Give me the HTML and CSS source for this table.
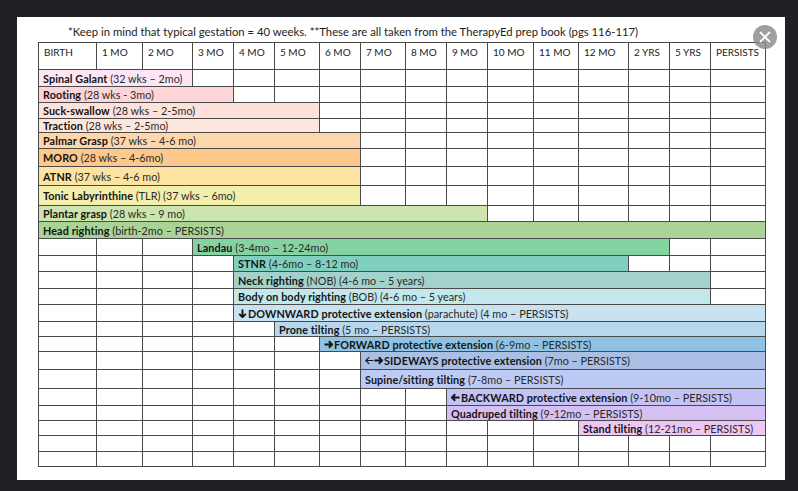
FILE: index.html
```html
<!DOCTYPE html>
<html>
<head>
<meta charset="utf-8">
<link rel="stylesheet" href="styles.css">
</head>
<body>
<div class="card">
  <p class="title">*Keep in mind that typical gestation = 40 weeks. **These are all taken from the TherapyEd prep book (pgs 116-117)</p>
  <div class="chart">
    <div class="c h">BIRTH</div><div class="c h">1 MO</div><div class="c h">2 MO</div><div class="c h">3 MO</div><div class="c h">4 MO</div><div class="c h">5 MO</div><div class="c h">6 MO</div><div class="c h">7 MO</div><div class="c h">8 MO</div><div class="c h">9 MO</div><div class="c h">10 MO</div><div class="c h">11 MO</div><div class="c h">12 MO</div><div class="c h">2 YRS</div><div class="c h">5 YRS</div><div class="c h">PERSISTS</div>

    <div class="c bar s3 spinal"><b>Spinal Galant</b>&nbsp;(32 wks – 2mo)</div><div class="c"></div><div class="c"></div><div class="c"></div><div class="c"></div><div class="c"></div><div class="c"></div><div class="c"></div><div class="c"></div><div class="c"></div><div class="c"></div><div class="c"></div><div class="c"></div><div class="c"></div>

    <div class="c bar s4 rooting"><b>Rooting</b>&nbsp;(28 wks - 3mo)</div><div class="c"></div><div class="c"></div><div class="c"></div><div class="c"></div><div class="c"></div><div class="c"></div><div class="c"></div><div class="c"></div><div class="c"></div><div class="c"></div><div class="c"></div><div class="c"></div>

    <div class="c bar s6 suck"><b>Suck-swallow</b>&nbsp;(28 wks – 2-5mo)</div><div class="c"></div><div class="c"></div><div class="c"></div><div class="c"></div><div class="c"></div><div class="c"></div><div class="c"></div><div class="c"></div><div class="c"></div><div class="c"></div>

    <div class="c bar s6 traction"><b>Traction</b>&nbsp;(28 wks – 2-5mo)</div><div class="c"></div><div class="c"></div><div class="c"></div><div class="c"></div><div class="c"></div><div class="c"></div><div class="c"></div><div class="c"></div><div class="c"></div><div class="c"></div>

    <div class="c bar s7 palmar"><b>Palmar Grasp</b>&nbsp;(37 wks – 4-6 mo)</div><div class="c"></div><div class="c"></div><div class="c"></div><div class="c"></div><div class="c"></div><div class="c"></div><div class="c"></div><div class="c"></div><div class="c"></div>

    <div class="c bar s7 moro"><b>MORO</b>&nbsp;(28 wks – 4-6mo)</div><div class="c"></div><div class="c"></div><div class="c"></div><div class="c"></div><div class="c"></div><div class="c"></div><div class="c"></div><div class="c"></div><div class="c"></div>

    <div class="c bar s7 atnr"><b>ATNR</b>&nbsp;(37 wks – 4-6 mo)</div><div class="c"></div><div class="c"></div><div class="c"></div><div class="c"></div><div class="c"></div><div class="c"></div><div class="c"></div><div class="c"></div><div class="c"></div>

    <div class="c bar s7 tlr"><b>Tonic Labyrinthine</b>&nbsp;(TLR) (37 wks – 6mo)</div><div class="c"></div><div class="c"></div><div class="c"></div><div class="c"></div><div class="c"></div><div class="c"></div><div class="c"></div><div class="c"></div><div class="c"></div>

    <div class="c bar s10 plantar"><b>Plantar grasp</b>&nbsp;(28 wks – 9 mo)</div><div class="c"></div><div class="c"></div><div class="c"></div><div class="c"></div><div class="c"></div><div class="c"></div>

    <div class="c bar s16 head"><b>Head righting</b>&nbsp;(birth-2mo – PERSISTS)</div>

    <div class="c"></div><div class="c"></div><div class="c"></div><div class="c bar s11 landau"><b>Landau</b>&nbsp;(3-4mo – 12-24mo)</div><div class="c"></div><div class="c"></div>

    <div class="c"></div><div class="c"></div><div class="c"></div><div class="c"></div><div class="c bar s9 stnr"><b>STNR</b>&nbsp;(4-6mo – 8-12 mo)</div><div class="c"></div><div class="c"></div><div class="c"></div>

    <div class="c"></div><div class="c"></div><div class="c"></div><div class="c"></div><div class="c bar s11 neck"><b>Neck righting</b>&nbsp;(NOB) (4-6 mo – 5 years)</div><div class="c"></div>

    <div class="c"></div><div class="c"></div><div class="c"></div><div class="c"></div><div class="c bar s11 bob"><b>Body on body righting</b>&nbsp;(BOB) (4-6 mo – 5 years)</div><div class="c"></div>

    <div class="c"></div><div class="c"></div><div class="c"></div><div class="c"></div><div class="c bar s12 down"><b><svg class="arr" viewBox="0 0 9 9"><path d="M4.5 0.5V8M1.2 4.8L4.5 8.2L7.8 4.8"/></svg>DOWNWARD protective extension</b>&nbsp;(parachute) (4 mo – PERSISTS)</div>

    <div class="c"></div><div class="c"></div><div class="c"></div><div class="c"></div><div class="c"></div><div class="c bar s11 prone"><b>Prone tilting</b>&nbsp;(5 mo – PERSISTS)</div>

    <div class="c"></div><div class="c"></div><div class="c"></div><div class="c"></div><div class="c"></div><div class="c"></div><div class="c bar s10 forward"><b><svg class="arr" viewBox="0 0 9 9"><path d="M0.5 4.5H8M4.8 1.2L8.2 4.5L4.8 7.8"/></svg>FORWARD protective extension</b>&nbsp;(6-9mo – PERSISTS)</div>

    <div class="c"></div><div class="c"></div><div class="c"></div><div class="c"></div><div class="c"></div><div class="c"></div><div class="c"></div><div class="c bar s9 side"><b><svg class="arr thin" viewBox="0 0 9 9"><path d="M8.5 4.5H1M4.2 1.2L0.8 4.5L4.2 7.8"/></svg><svg class="arr" viewBox="0 0 9 9"><path d="M0.5 4.5H8M4.8 1.2L8.2 4.5L4.8 7.8"/></svg>SIDEWAYS protective extension</b>&nbsp;(7mo – PERSISTS)</div>

    <div class="c"></div><div class="c"></div><div class="c"></div><div class="c"></div><div class="c"></div><div class="c"></div><div class="c"></div><div class="c bar s9 supine"><b>Supine/sitting tilting</b>&nbsp;(7-8mo – PERSISTS)</div>

    <div class="c"></div><div class="c"></div><div class="c"></div><div class="c"></div><div class="c"></div><div class="c"></div><div class="c"></div><div class="c"></div><div class="c"></div><div class="c bar s7 back"><b><svg class="arr" viewBox="0 0 9 9"><path d="M8.5 4.5H1M4.2 1.2L0.8 4.5L4.2 7.8"/></svg>BACKWARD protective extension</b>&nbsp;(9-10mo – PERSISTS)</div>

    <div class="c"></div><div class="c"></div><div class="c"></div><div class="c"></div><div class="c"></div><div class="c"></div><div class="c"></div><div class="c"></div><div class="c"></div><div class="c bar s7 quad"><b>Quadruped tilting</b>&nbsp;(9-12mo – PERSISTS)</div>

    <div class="c"></div><div class="c"></div><div class="c"></div><div class="c"></div><div class="c"></div><div class="c"></div><div class="c"></div><div class="c"></div><div class="c"></div><div class="c"></div><div class="c"></div><div class="c"></div><div class="c bar s4 stand"><b>Stand tilting</b>&nbsp;(12-21mo – PERSISTS)</div>

    <div class="c"></div><div class="c"></div><div class="c"></div><div class="c"></div><div class="c"></div><div class="c"></div><div class="c"></div><div class="c"></div><div class="c"></div><div class="c"></div><div class="c"></div><div class="c"></div><div class="c"></div><div class="c"></div><div class="c"></div><div class="c"></div>

    <div class="c"></div><div class="c"></div><div class="c"></div><div class="c"></div><div class="c"></div><div class="c"></div><div class="c"></div><div class="c"></div><div class="c"></div><div class="c"></div><div class="c"></div><div class="c"></div><div class="c"></div><div class="c"></div><div class="c"></div><div class="c"></div>
  </div>
  <button class="close" aria-label="Close"><svg viewBox="0 0 24 24"><path d="M7 7L17 17M17 7L7 17"/></svg></button>
</div>
</body>
</html>
```

FILE: styles.css
```css
html, body {
  margin: 0;
  padding: 0;
  background: #1f2127;
  height: 491px;
  overflow: hidden;
  font-family: Lato, "Liberation Sans", sans-serif;
}

.card {
  position: relative;
  margin: 17px 0 0 17px;
  width: 768px;
  height: 463px;
  background: #fff;
  padding: 7px 0 0 21px;
  box-sizing: border-box;
}

.title {
  margin: 0 0 2px 30px;
  font-size: 11.3px;
  line-height: 16px;
  color: #1c1c1c;
  white-space: nowrap;
}

.chart {
  display: grid;
  width: max-content;
  grid-template-columns: 58px 46px 50px 41px 41px 45px 41px 45px 41px 41px 46px 45px 50px 41px 41px 55px;
  grid-template-rows: 27px 17px 16px 16px 14px 16px 18px 19px 20px 16px 17px 17px 16px 17px 16px 17px 15px 15px 18px 19px 17px 15px 15px 16px 15px;
  border-top: 1px solid #4a4a4a;
  border-left: 1px solid #4a4a4a;
}

.c {
  box-sizing: border-box;
  border-right: 1px solid #4a4a4a;
  border-bottom: 1px solid #4a4a4a;
  min-width: 0;
}

.h {
  font-size: 10px;
  line-height: 12px;
  padding: 3px 0 0 5px;
  color: #222;
  white-space: nowrap;
}

.bar {
  display: flex;
  align-items: center;
  padding-left: 4px;
  font-size: 10.8px;
  color: #2a2a2a;
  white-space: nowrap;
  overflow: visible;
}

.bar b {
  font-weight: 700;
  color: #141414;
  letter-spacing: 0.1px;
  display: inline-flex;
  align-items: center;
}

.arr {
  width: 9px;
  height: 9px;
  margin-right: 1px;
  fill: none;
  stroke: #141414;
  stroke-width: 1.9;
}

.arr.thin {
  stroke-width: 1.1;
  margin-right: 0;
}

.s3 { grid-column: span 3; }
.s4 { grid-column: span 4; }
.s6 { grid-column: span 6; }
.s7 { grid-column: span 7; }
.s9 { grid-column: span 9; }
.s10 { grid-column: span 10; }
.s11 { grid-column: span 11; }
.s12 { grid-column: span 12; }
.s16 { grid-column: span 16; }

.spinal { background: #fce5f5; }
.rooting { background: #fdd5d8; }
.suck { background: #fde1da; }
.traction { background: #fde7dc; }
.palmar { background: #fdd6ac; }
.moro { background: #fcc88c; }
.atnr { background: #fde3a2; }
.tlr { background: #f3eeab; }
.plantar { background: #cde4ae; }
.head { background: #a9d496; }
.landau { background: #86d3a2; }
.stnr { background: #80d0c0; }
.neck { background: #a3d2cc; }
.bob { background: #c2e8eb; }
.down { background: #c8e2f0; }
.prone { background: #b6d7ee; }
.forward { background: #8fc1e2; }
.side { background: #a9c0e4; }
.supine { background: #bccaf4; }
.back { background: #c3c3f6; }
.quad { background: #d4c0f3; }
.stand { background: #edc7f4; }

.close {
  position: absolute;
  left: 736px;
  top: 8px;
  width: 24px;
  height: 24px;
  padding: 0;
  border: none;
  border-radius: 50%;
  background: rgba(135, 135, 135, 0.8);
  display: flex;
  align-items: center;
  justify-content: center;
}

.close svg {
  width: 24px;
  height: 24px;
  fill: none;
  stroke: #fff;
  stroke-width: 1.8;
}
```
